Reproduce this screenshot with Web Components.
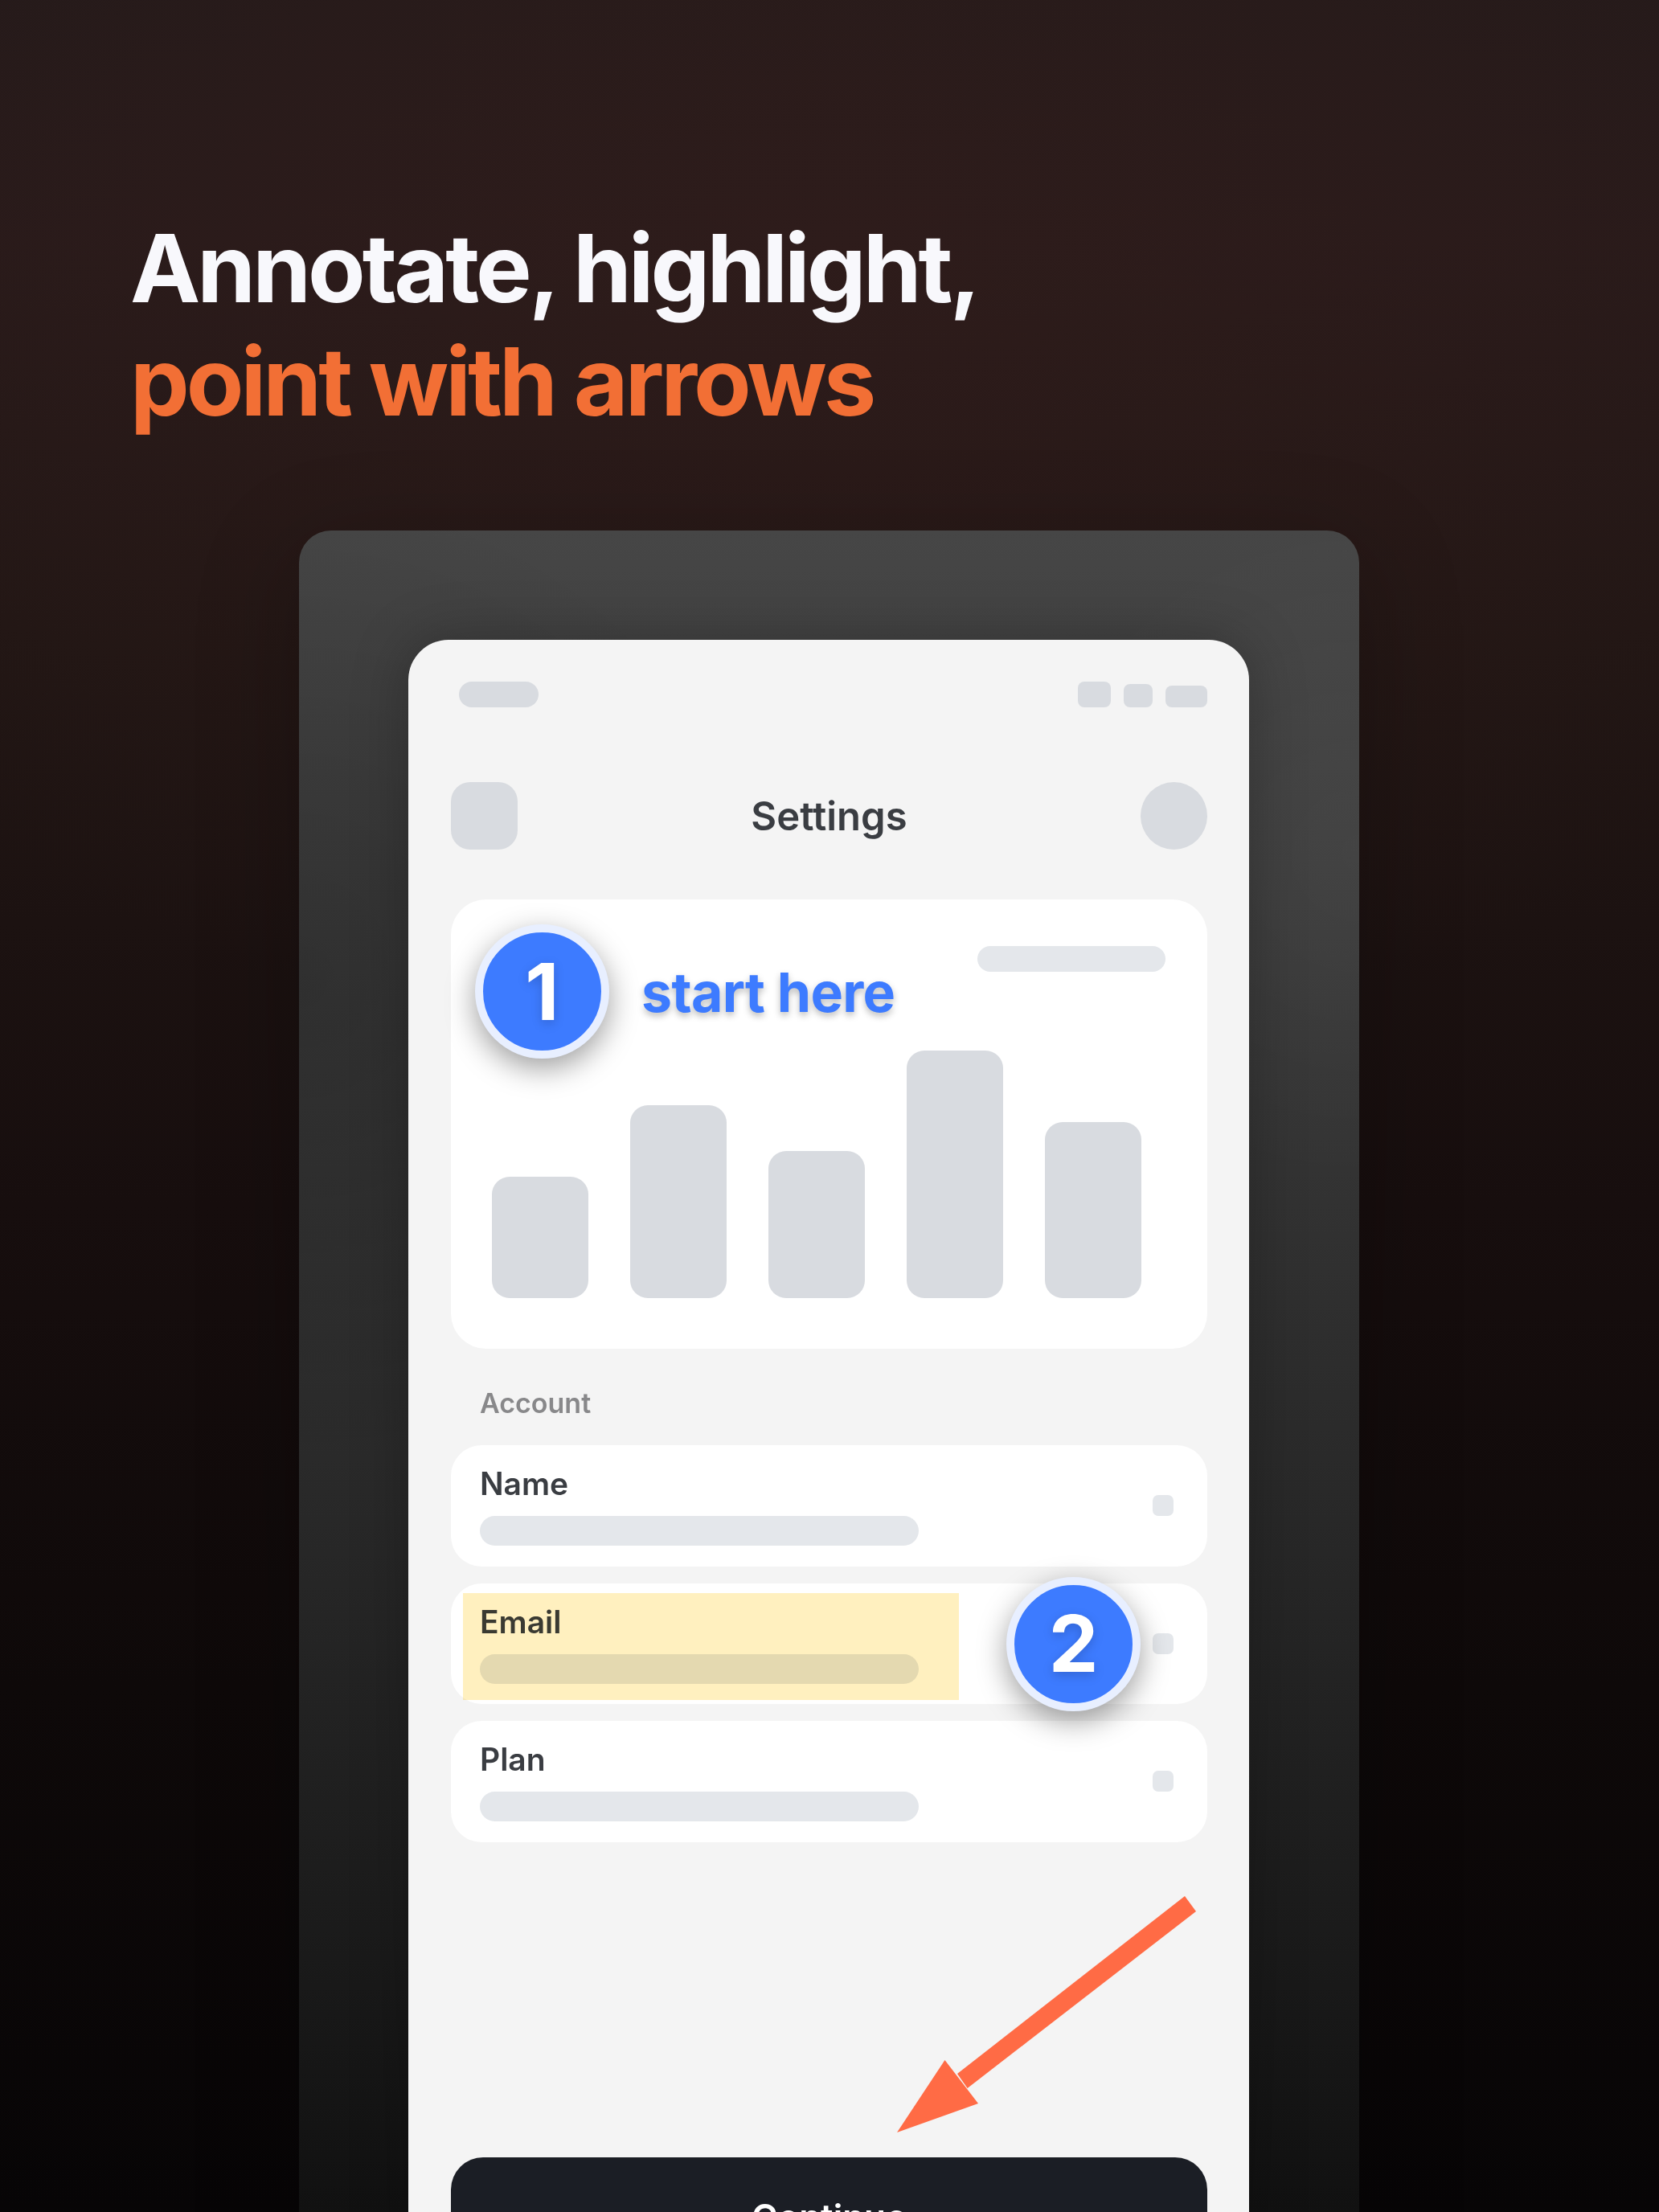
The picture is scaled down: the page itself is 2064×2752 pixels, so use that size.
<!DOCTYPE html>
<html lang="en">
<head>
<meta charset="utf-8">
<title>Annotate, highlight, point with arrows</title>
<style>
html,body{margin:0;padding:0;background:#050304}
body{font-family:Inter,"Liberation Sans",sans-serif}
</style>
</head>
<body>
<promo-page>
  <promo-heading slot="heading">
    <span>Annotate, highlight,</span>
    <span slot="accent">point with arrows</span>
  </promo-heading>
  <device-frame>
    <app-screen>
      <status-bar></status-bar>
      <nav-header>Settings</nav-header>
      <chart-card>
        <step-badge slot="over" style="left:30px;top:31px">1</step-badge>
        <annot-label slot="over" style="left:237px;top:74px">start here</annot-label>
      </chart-card>
      <section-label>Account</section-label>
      <row-list>
        <setting-row>Name</setting-row>
        <setting-row highlighted>Email
          <step-badge slot="over" style="left:691px;top:-8px">2</step-badge>
        </setting-row>
        <setting-row>Plan</setting-row>
      </row-list>
      <cta-button>Continue</cta-button>
      <annot-arrow slot="over"></annot-arrow>
    </app-screen>
  </device-frame>
</promo-page>
<script>
function def(name, css, html){
  const t=document.createElement('template');
  t.innerHTML='<style>'+css+'</style>'+html;
  customElements.define(name,class extends HTMLElement{
    constructor(){super();this.attachShadow({mode:'open'}).appendChild(t.content.cloneNode(true));}
  });
}
def('promo-page',`
  :host{display:block;width:2064px;height:2752px;overflow:hidden;box-sizing:border-box;padding-top:263px;
    background:
      radial-gradient(ellipse 1500px 1000px at 50% 330px,rgba(52,30,28,.5),rgba(52,30,28,0) 100%),
      linear-gradient(180deg,#241a1a 0,#281a1a 300px,#211614 800px,#170e0e 1500px,#0e0909 2100px,#070506 2752px);
    font-family:Inter,"Liberation Sans",sans-serif}
`,`<slot name="heading"></slot><slot></slot>`);
def('promo-heading',`
  :host{display:block;padding-left:162px;font-size:117px;line-height:141px;font-weight:700;letter-spacing:-.034em;color:#f8f8fc;height:282px}
  .l{display:block;white-space:nowrap}
  .a{color:#f26f35}
`,`<span class="l"><slot></slot></span><span class="l a"><slot name="accent"></slot></span>`);
def('device-frame',`
  :host{display:block;box-sizing:border-box;width:1319px;margin:115px 0 0 372px;padding:136px 137px 0 136px;height:2400px;border-radius:40px;
    background:
      radial-gradient(circle 420px at 100% 400px,rgba(255,255,255,.035),rgba(255,255,255,0)),
      radial-gradient(circle 620px at 0 560px,rgba(0,0,0,.16),rgba(0,0,0,0)),
      linear-gradient(180deg,#464646 0,#303030 920px,#1b1b1b 1740px,#111 2092px,#111 100%);
    box-shadow:0 30px 130px rgba(0,0,0,.24)}
`,`<slot></slot>`);
def('app-screen',`
  :host{display:flex;flex-direction:column;position:relative;box-sizing:border-box;width:1046px;height:2260px;padding:52px 52px 0 53px;background:#f4f4f4;border-radius:50px 50px 0 0;box-shadow:0 0 70px rgba(0,0,0,.25);font-family:Inter,"Liberation Sans",sans-serif}
`,`<slot></slot><slot name="over"></slot>`);
def('status-bar',`
  :host{display:flex;align-items:flex-end;height:32px;padding-left:10px}
  i{display:block;background:#d8dbe0;border-radius:8px}
  .p{width:99px;height:32px;border-radius:16px;margin-right:auto}
  .a{width:41px;height:32px}.b{width:36px;height:29px;margin-left:16px}.c{width:52px;height:27px;margin-left:16px}
`,`<i class="p"></i><i class="a"></i><i class="b"></i><i class="c"></i>`);
def('nav-header',`
  :host{display:flex;align-items:center;justify-content:space-between;height:84px;margin-top:93px;font-size:49px;font-weight:600;color:#3a3d42}
  i{display:block;width:83px;height:84px;background:#d8dbe0;border-radius:24px}
  .r{border-radius:50%}
`,`<i></i><span><slot></slot></span><i class="r"></i>`);
def('chart-card',`
  :host{display:block;position:relative;box-sizing:border-box;height:559px;margin-top:62px;padding:58px 52px 63px 51px;background:#fff;border-radius:44px}
  .top{display:flex;justify-content:flex-end;height:32px}
  .top i{display:block;width:234px;height:32px;border-radius:16px;background:#e4e7eb}
  .bars{display:flex;align-items:flex-end;gap:52px;height:308px;margin-top:98px}
  .bars i{display:block;width:120px;background:#d8dbe0;border-radius:22px}
`,`<div class="top"><i></i></div>
   <div class="bars"><i style="height:151px"></i><i style="height:240px"></i><i style="height:183px"></i><i style="height:308px"></i><i style="height:219px"></i></div>
   <slot name="over"></slot>`);
def('step-badge',`
  :host{display:flex;align-items:center;justify-content:center;position:absolute;box-sizing:border-box;width:167px;height:167px;border:10px solid #e8efff;border-radius:50%;background:#3d7bff;color:#fff;font-size:98px;font-weight:700;line-height:1;box-shadow:0 12px 36px rgba(0,0,0,.38);text-shadow:0 4px 14px rgba(0,0,0,.18);z-index:3}
`,`<slot></slot>`);
def('annot-label',`
  :host{display:block;position:absolute;white-space:nowrap;font-size:68px;line-height:82px;font-weight:700;letter-spacing:-.01em;color:#3d7bff;text-shadow:0 4px 8px rgba(0,0,0,.28)}
`,`<slot></slot>`);
def('section-label',`
  :host{display:block;height:42px;margin:47px 0 31px;padding-left:36px;font-size:34px;line-height:42px;font-weight:600;color:#88888a}
`,`<slot></slot>`);
def('row-list',`
  :host{display:flex;flex-direction:column;gap:21px}
`,`<slot></slot>`);
def('setting-row',`
  :host{display:flex;align-items:center;justify-content:space-between;position:relative;box-sizing:border-box;height:150.5px;padding:0 42px 0 36px;background:#fff;border-radius:38px;color:#3a3d42}
  .t{display:flex;flex-direction:column;gap:17px;font-size:39px;line-height:46px;font-weight:600}
  .t i{display:block;width:546px;height:37px;border-radius:19px;background:#e4e7eb}
  .s{display:block;width:26px;height:26px;border-radius:7px;background:#e4e7eb}
  .h{display:none;position:absolute;left:15px;top:12px;width:617px;height:133px;background:#fff0bf;mix-blend-mode:multiply;z-index:1}
  :host([highlighted]) .h{display:block}
`,`<div class="t"><span><slot></slot></span><i></i></div><b class="s"></b><div class="h"></div><slot name="over"></slot>`);
def('cta-button',`
  :host{display:flex;align-items:center;justify-content:center;flex:none;height:148px;margin-top:392px;background:#1b1e25;border-radius:40px;color:#fff;font-size:44px;font-weight:600}
`,`<slot></slot>`);
def('annot-arrow',`
  :host{display:block;position:absolute;left:600px;top:1550px;width:400px;height:320px;z-index:4}
  svg{display:block;width:100%;height:100%}
`,`<svg viewBox="1108 2346 400 320" aria-hidden="true"><polygon fill="#ff6b45" points="1474,2359 1488,2378 1203.6,2598 1191,2580"/><polygon fill="#ff6b45" points="1175.5,2563 1217,2617 1116,2653"/></svg>`);
</script>
</body>
</html>
